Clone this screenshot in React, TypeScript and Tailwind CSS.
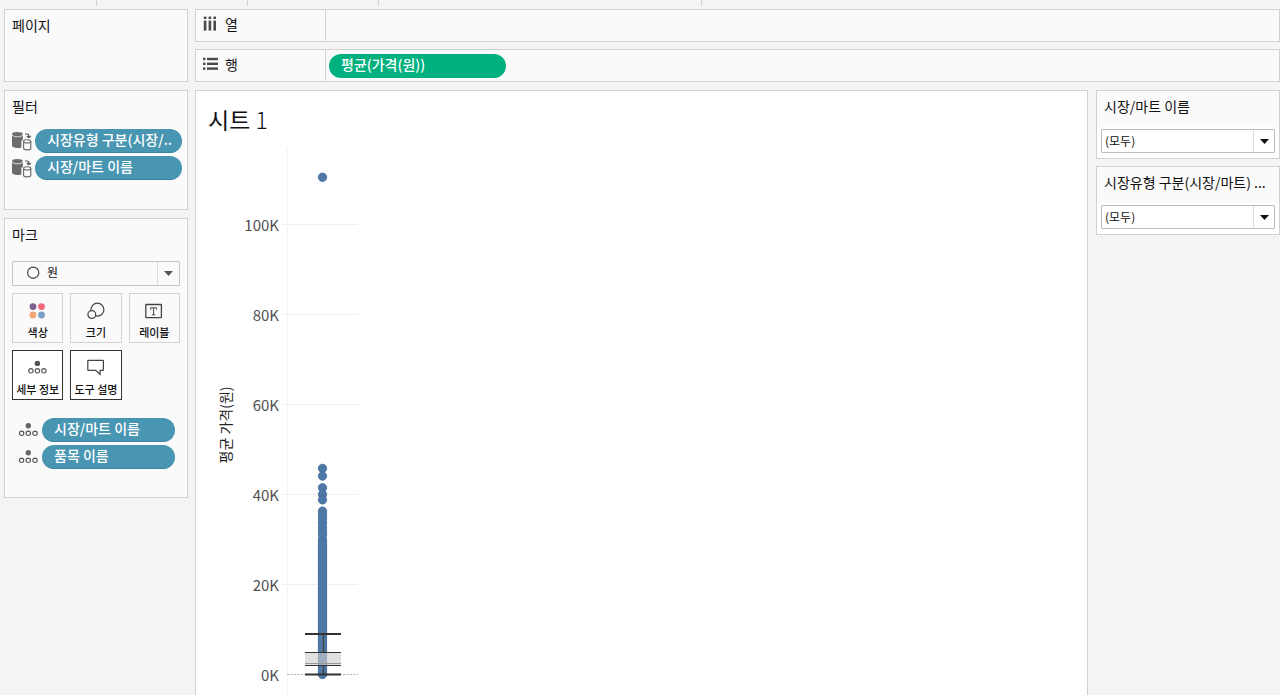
import type { ReactNode } from 'react';

const FilterIcon = () => (
  <svg width="20" height="20" viewBox="0 0 20 20" aria-hidden="true" className="shrink-0">
    <path d="M0 3.4V14.6C0 16.2 2.6 17 5.4 17c1.6 0 3-.2 4-.6V9.4h1.4V3.4z" fill="#6b6b6b" />
    <ellipse cx="5.4" cy="2.8" rx="5.3" ry="1.9" fill="#6b6b6b" />
    <path d="M0 3.6a5.4 2.2 0 0 0 10.8 0" fill="none" stroke="#fafafa" strokeWidth="0.8" />
    <path d="M13 3h2.2c1.1 0 1.6.6 1.6 1.7V6.4M14.8 5l2 1.8L18.700 5" fill="none" stroke="#555" strokeWidth="1.2" />
    <path d="M11.6 10.6v6.6c0 1 1.5 1.7 3.6 1.7s3.6-.7 3.6-1.7v-6.6" fill="#fafafa" stroke="#666" strokeWidth="1.1" />
    <ellipse cx="15.2" cy="10.4" rx="3.6" ry="1.6" fill="#fafafa" stroke="#666" strokeWidth="1.1" />
  </svg>
);

const DetailIcon = () => (
  <svg width="20" height="14" viewBox="0 0 20 14" aria-hidden="true" className="shrink-0">
    <circle cx="10.3" cy="2.8" r="2.7" fill="#666" />
    <g fill="none" stroke="#555" strokeWidth="1.1">
      <circle cx="3.6" cy="10.3" r="2.2" />
      <circle cx="10.3" cy="10.3" r="2.2" />
      <circle cx="17" cy="10.3" r="2.2" />
    </g>
  </svg>
);

const ColorIcon = () => (
  <svg width="18" height="18" viewBox="0 0 18 18" aria-hidden="true">
    <circle cx="4" cy="4.6" r="3.4" fill="#7b6291" />
    <circle cx="12.5" cy="4.6" r="3.4" fill="#f0667a" />
    <circle cx="4" cy="13" r="3.4" fill="#f4a477" />
    <circle cx="12.5" cy="13" r="3.4" fill="#7a9fc8" />
  </svg>
);

const SizeIcon = () => (
  <svg width="18" height="18" viewBox="0 0 18 18" aria-hidden="true" fill="none" stroke="#444" strokeWidth="1.2">
    <circle cx="10.4" cy="7.7" r="6.5" />
    <circle cx="4.8" cy="12.5" r="3.9" fill="#fafafa" />
  </svg>
);

const LabelIcon = () => (
  <svg width="18" height="18" viewBox="0 0 18 18" aria-hidden="true" fill="none" stroke="#444">
    <rect x="0.8" y="2.5" width="15.6" height="13.2" rx="0.6" strokeWidth="1.3" />
    <path d="M5.7 7.6V5.8h5.8v1.8M8.6 5.8v7M6.900 12.8h3.4" strokeWidth="1" />
  </svg>
);

const DetailButtonIcon = () => (
  <svg width="20" height="18" viewBox="0 0 20 18" aria-hidden="true">
    <circle cx="9.400" cy="4.400" r="2.7" fill="#555" />
    <g fill="none" stroke="#555" strokeWidth="1.1">
      <circle cx="2.900" cy="11.800" r="2.2" />
      <circle cx="9.400" cy="11.800" r="2.2" />
      <circle cx="15.900" cy="11.800" r="2.2" />
    </g>
  </svg>
);

const TooltipIcon = () => (
  <svg width="18" height="18" viewBox="0 0 18 18" aria-hidden="true" fill="none" stroke="#444" strokeWidth="1.2">
    <path d="M1.4 1.400h14.400c.4 0 .6.2.6.6v8.700c0 .4-.2.6-.6.6h-2.700v4l-4.400-4H1.400c-.4 0-.6-.2-.6-.6V2c0-.4.2-.6.6-.6z" />
  </svg>
);

const ColumnsIcon = () => (
  <svg width="14" height="16" viewBox="0 0 14 16" aria-hidden="true" fill="#4a4a4a">
    {[0.8, 5.6, 10.4].map((x) => (
      <g key={x}>
        <rect x={x} y="0.600" width="2.6" height="2.4" />
        <rect x={x} y="4.6" width="2.6" height="10" />
      </g>
    ))}
  </svg>
);

const RowsIcon = () => (
  <svg width="16" height="14" viewBox="0 0 16 14" aria-hidden="true" fill="#4a4a4a">
    {[0.8, 5.6, 10.4].map((y) => (
      <g key={y}>
        <rect x="0" y={y} width="2.4" height="2.4" />
        <rect x="4" y={y} width="11" height="2.4" />
      </g>
    ))}
  </svg>
);

const Card = ({ title, className, children }: { title: string; className: string; children?: ReactNode }) => (
  <section className={`border border-[#d2d2d2] bg-[#fafafa] px-[7px] ${className}`}>
    <h2 className="pt-1 text-sm leading-[22px]">{title}</h2>
    {children}
  </section>
);

const Pill = ({ children }: { children: ReactNode }) => (
  <button
    type="button"
    className="h-6 min-w-0 flex-1 overflow-hidden rounded-full border-b border-[#3585a1] bg-[#4996b2] pb-[3px] pl-3 text-left text-sm leading-5 font-medium whitespace-nowrap text-white"
  >
    {children}
  </button>
);

const MarkButton = ({ label, icon, active }: { label: string; icon: ReactNode; active?: boolean }) => (
  <button
    type="button"
    className={`flex h-[50px] flex-col items-center gap-1 border pt-2 text-[11px] leading-4 font-medium whitespace-nowrap ${
      active ? 'border-[#333] bg-white' : 'border-[#d2d2d2] bg-[#fafafa]'
    }`}
  >
    {icon}
    <span>{label}</span>
  </button>
);

const QuickFilter = ({ id, title }: { id: string; title: string }) => (
  <section className="border border-[#d2d2d2] bg-white">
    <label htmlFor={id} className="block h-9 truncate bg-[#fafafa] pl-[7px] text-sm leading-[30px]">
      {title}
    </label>
    <div className="relative mx-1 mt-[2px] mb-[5px]">
      <select
        id={id}
        className="block h-6 w-full appearance-none rounded-[1px] border border-[#bdbdbd] bg-white pr-6 pl-[3px] text-xs leading-[22px]"
      >
        <option>(모두)</option>
      </select>
      <span className="pointer-events-none absolute inset-y-px right-px flex w-[21px] items-center justify-center border-l border-[#dcdcdc]">
        <svg width="9" height="5" viewBox="0 0 9 5" aria-hidden="true">
          <path d="M0 0h9L4.5 5z" fill="#111" />
        </svg>
      </span>
    </div>
  </section>
);

const Shelf = ({ icon, label, children }: { icon: ReactNode; label: string; children?: ReactNode }) => (
  <div className="flex h-[33px] border border-[#d2d2d2] bg-[#fafafa]">
    <div className="flex w-[130px] items-center border-r border-[#d2d2d2] pb-[3px] pl-[7px] text-sm leading-5">
      <span className="flex w-[22px] items-center">{icon}</span>
      {label}
    </div>
    <div className="flex flex-1 items-center pl-[3px]">{children}</div>
  </div>
);

const ZERO_Y = 529.5;
const PX_PER_K = 4.5;
const yOf = (k: number) => ZERO_Y - k * PX_PER_K;
const ticks = [100, 80, 60, 40, 20, 0];
const sparse = [110.5, 45.8, 44.1, 41.5, 40, 38.8, 36.3, 35.4, 34.6, 33.7, 32.8, 31.9, 31.1, 30];
const dense = Array.from({ length: 60 }, (_, i) => 29.3 - i * 0.5).filter((v) => v >= 0);

const Chart = () => (
  <svg
    width="180"
    height="550"
    viewBox="0 0 180 550"
    role="img"
    aria-label="평균 가격(원)"
    className="block font-['Noto_Sans_CJK_KR',sans-serif]"
  >
    <path d="M91.5 3V550" stroke="#f4f4f4" />
    {ticks.map((k) => (
      <g key={k}>
        <path
          d={`M${k ? 86 : 91} ${Math.round(yOf(k)) - 0.5}H162`}
          stroke={k ? '#efefef' : '#b0b0b0'}
          strokeDasharray={k ? undefined : '2 1.5'}
        />
        <text x="83" y={yOf(k) + 6} textAnchor="end" fontSize="15" fill="#505050">
          {k}K
        </text>
      </g>
    ))}
    <text transform="translate(35 280) rotate(-90)" textAnchor="middle" fontSize="14" fill="#222">
      평균 가격(원)
    </text>
    <g fill="#4e79a7" stroke="#3f6a9a" strokeWidth="0.8">
      {[...sparse, ...dense, 0].map((k, i) => (
        <circle key={i} cx="126.5" cy={yOf(k)} r="4.2" />
      ))}
    </g>
    <path d={`M126.5 ${yOf(36.3)}V${ZERO_Y}`} stroke="#4e79a7" strokeWidth="7.4" />
    <path d="M127.5 489V508M127.5 521V530" stroke="#444" strokeWidth="1.4" />
    <rect x="109" y="508" width="36" height="13" fill="#cfcfcf" fillOpacity="0.62" />
    <path d="M109 518.5H145" stroke="#999" />
    <path d="M109 507.5H145M109 520.5H145" stroke="#333" strokeWidth="1.2" />
    <path d="M109 489H145M109 529.5H145" stroke="#333" strokeWidth="2" />
  </svg>
);

export default function App() {
  return (
    <div className="flex h-screen flex-col overflow-hidden bg-[#f4f4f4] font-['Noto_Sans_CJK_KR',sans-serif] text-[#111]">
      <div className="flex h-[6px] shrink-0" aria-hidden="true">
        <div className="w-[97px] border-r border-[#d2d2d2]" />
        <div className="w-[151px] border-r border-[#d2d2d2]" />
        <div className="w-[131px] border-r border-[#d2d2d2]" />
        <div className="w-[323px] border-r border-[#d2d2d2]" />
      </div>
      <div className="flex min-h-0 flex-1 gap-[7px] pt-[3px] pl-1">
        <aside className="flex w-[184px] shrink-0 flex-col gap-2">
          <Card title="페이지" className="h-[73px]" />
          <Card title="필터" className="h-[120px] pr-[5px]">
            <div className="mt-3 flex flex-col gap-[3px]">
              {['시장유형 구분(시장/..', '시장/마트 이름'].map((name) => (
                <div key={name} className="flex items-center gap-[3px]">
                  <FilterIcon />
                  <Pill>{name}</Pill>
                </div>
              ))}
            </div>
          </Card>
          <Card title="마크" className="h-[280px]">
            <div className="relative mt-4">
              <select
                aria-label="마크 유형"
                className="block h-[25px] w-full appearance-none rounded-[1px] border border-[#c4c4c4] bg-[#fafafa] pr-6 pb-[3px] pl-[34px] text-xs leading-5"
              >
                <option>원</option>
              </select>
              <svg
                width="14"
                height="14"
                viewBox="0 0 14 14"
                aria-hidden="true"
                className="pointer-events-none absolute top-[5px] left-[14px]"
              >
                <circle cx="7.2" cy="6.700" r="5.6" fill="none" stroke="#444" strokeWidth="1.2" />
              </svg>
              <span className="pointer-events-none absolute inset-y-px right-px flex w-[22px] items-center justify-center border-l border-[#dcdcdc]">
                <svg width="9" height="5" viewBox="0 0 9 5" aria-hidden="true">
                  <path d="M0 0h9L4.5 5z" fill="#555" />
                </svg>
              </span>
            </div>
            <div className="mt-[7px] grid grid-cols-3 gap-[7px]">
              <MarkButton label="색상" icon={<ColorIcon />} />
              <MarkButton label="크기" icon={<SizeIcon />} />
              <MarkButton label="레이블" icon={<LabelIcon />} />
              <MarkButton label="세부 정보" icon={<DetailButtonIcon />} active />
              <MarkButton label="도구 설명" icon={<TooltipIcon />} active />
            </div>
            <div className="mt-[18px] flex flex-col gap-[3px] pr-[5px] pl-[6px]">
              {['시장/마트 이름', '품목 이름'].map((name) => (
                <div key={name} className="flex items-center gap-1">
                  <DetailIcon />
                  <Pill>{name}</Pill>
                </div>
              ))}
            </div>
          </Card>
        </aside>
        <div className="flex min-w-0 flex-1 flex-col gap-[7px]">
          <Shelf icon={<ColumnsIcon />} label="열" />
          <Shelf icon={<RowsIcon />} label="행">
            <button
              type="button"
              className="h-6 w-[177px] rounded-full bg-[#00b180] px-3 pb-1 text-left text-sm leading-5 font-medium text-white"
            >
              평균(가격(원))
            </button>
          </Shelf>
          <div className="flex min-h-0 flex-1 gap-2 pt-px">
            <main className="min-w-0 flex-1 border border-b-0 border-[#d2d2d2] bg-white">
              <h1 className="h-[54px] pt-3 pl-3 text-[23px] leading-8 font-normal">
                시트 <span className="font-light">1</span>
              </h1>
              <Chart />
            </main>
            <aside className="flex w-[184px] shrink-0 flex-col gap-[7px]">
              <QuickFilter id="market-name" title="시장/마트 이름" />
              <QuickFilter id="market-type" title="시장유형 구분(시장/마트) ..." />
            </aside>
          </div>
        </div>
      </div>
    </div>
  );
}
